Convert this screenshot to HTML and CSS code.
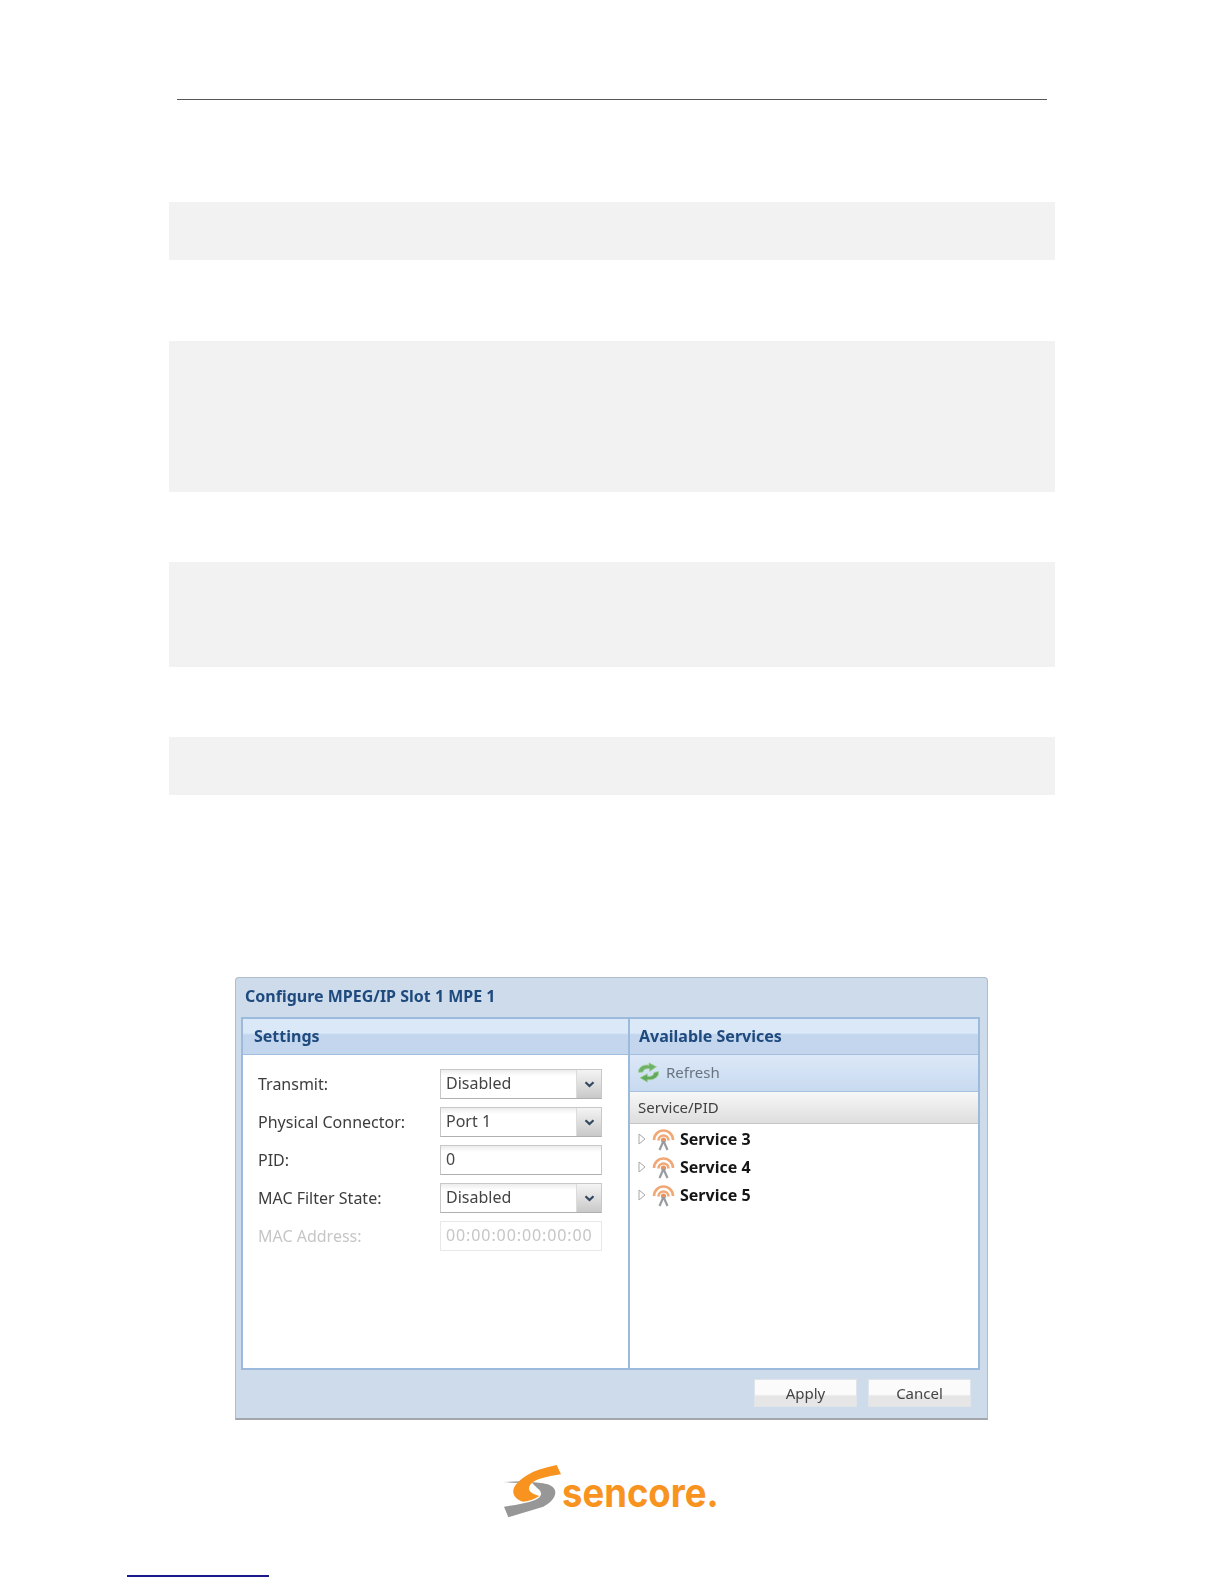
FILE: index.html
```html
<!DOCTYPE html>
<html lang="en">
<head>
<meta charset="utf-8">
<title>Configure MPEG/IP Slot 1 MPE 1</title>
<link rel="stylesheet" href="styles.css">
</head>
<body>
<div class="page">
  <div class="rule"></div>
  <div class="band band-a"></div>
  <div class="band band-b"></div>
  <div class="band band-c"></div>
  <div class="band band-d"></div>

  <section class="dialog">
    <h1 class="dialog-title">Configure MPEG/IP Slot 1 MPE 1</h1>
    <div class="panels">
      <div class="panel panel-left">
        <h2 class="panel-head">Settings</h2>
        <div class="form">
          <div class="row"><span class="label">Transmit:</span>
            <div class="field"><span class="val">Disabled</span><span class="trigger"><svg width="11" height="7" viewBox="0 0 11 7"><path d="M1.5 1.2 5.5 5 9.5 1.2" fill="none" stroke="#33475f" stroke-width="2.2"/></svg></span></div></div>
          <div class="row"><span class="label">Physical Connector:</span>
            <div class="field"><span class="val">Port 1</span><span class="trigger"><svg width="11" height="7" viewBox="0 0 11 7"><path d="M1.5 1.2 5.5 5 9.5 1.2" fill="none" stroke="#33475f" stroke-width="2.2"/></svg></span></div></div>
          <div class="row"><span class="label">PID:</span>
            <div class="field"><span class="val">0</span></div></div>
          <div class="row"><span class="label">MAC Filter State:</span>
            <div class="field"><span class="val">Disabled</span><span class="trigger"><svg width="11" height="7" viewBox="0 0 11 7"><path d="M1.5 1.2 5.5 5 9.5 1.2" fill="none" stroke="#33475f" stroke-width="2.2"/></svg></span></div></div>
          <div class="row row-disabled"><span class="label">MAC Address:</span>
            <div class="field"><span class="val val-mac">00:00:00:00:00:00</span></div></div>
        </div>
      </div>
      <div class="panel panel-right">
        <h2 class="panel-head">Available Services</h2>
        <div class="toolbar">
          <svg class="refresh-icon" width="23" height="21" viewBox="0 0 23 21">
            <path d="M1.500 10.500C1 5.500 6 2 12 3.200V.8L19.500 4.800 12.500 9.500V6.800C8.500 6.300 6.500 7.500 6 10Z" fill="#6fb267" stroke="#a4d29c" stroke-width=".8"/>
            <path d="M21.500 9.500C22.500 15 16.500 18.500 10.500 17.700V20.200L3 15.800 10.500 11.800V14.300C14 14.800 16.800 13.500 17 10.500Z" fill="#62a95b" stroke="#a4d29c" stroke-width=".8"/>
          </svg>
          <span>Refresh</span>
        </div>
        <div class="col-head">Service/PID</div>
        <ul class="tree">
          <li class="tree-row">
            <svg class="twist" width="8" height="12" viewBox="0 0 8 12"><path d="M1 1 7 6 1 11Z" fill="#fff" stroke="#a8a8a8"/></svg>
            <svg class="svc" width="23" height="23" viewBox="0 0 23 23"><g fill="none" stroke="#f1a877" stroke-width="2.600"><path d="M2 12a9.500 9.500 0 0 1 19 0"/><path d="M6.500 12.500a5 5 0 0 1 10 0"/></g><circle cx="11.500" cy="12" r="2.600" fill="#ea935a"/><path d="M11.500 13 7.500 22M11.500 13 15.500 22" fill="none" stroke="#989ca1" stroke-width="2.200"/></svg>
            <span>Service 3</span>
          </li>
          <li class="tree-row">
            <svg class="twist" width="8" height="12" viewBox="0 0 8 12"><path d="M1 1 7 6 1 11Z" fill="#fff" stroke="#a8a8a8"/></svg>
            <svg class="svc" width="23" height="23" viewBox="0 0 23 23"><g fill="none" stroke="#f1a877" stroke-width="2.600"><path d="M2 12a9.500 9.500 0 0 1 19 0"/><path d="M6.500 12.500a5 5 0 0 1 10 0"/></g><circle cx="11.500" cy="12" r="2.600" fill="#ea935a"/><path d="M11.500 13 7.500 22M11.500 13 15.500 22" fill="none" stroke="#989ca1" stroke-width="2.200"/></svg>
            <span>Service 4</span>
          </li>
          <li class="tree-row">
            <svg class="twist" width="8" height="12" viewBox="0 0 8 12"><path d="M1 1 7 6 1 11Z" fill="#fff" stroke="#a8a8a8"/></svg>
            <svg class="svc" width="23" height="23" viewBox="0 0 23 23"><g fill="none" stroke="#f1a877" stroke-width="2.600"><path d="M2 12a9.500 9.500 0 0 1 19 0"/><path d="M6.500 12.500a5 5 0 0 1 10 0"/></g><circle cx="11.500" cy="12" r="2.600" fill="#ea935a"/><path d="M11.500 13 7.500 22M11.500 13 15.500 22" fill="none" stroke="#989ca1" stroke-width="2.200"/></svg>
            <span>Service 5</span>
          </li>
        </ul>
      </div>
    </div>
    <div class="actions">
      <button class="btn" type="button">Apply</button>
      <button class="btn" type="button">Cancel</button>
    </div>
  </section>

  <div class="logo">
    <svg width="250" height="90" viewBox="0 0 750 270">
      <path d="M70 141 145 137 155 143 105 144Z" fill="#a8a8a8"/>
      <path d="M155 142C195 143 226 150 226 172 226 192 205 207 190 215L85 247 72 215C105 210 140 205 165 195 185 187 190 172 172 160 165 153 160 148 155 142Z" fill="#979797"/>
      <path d="M230 90 243 118C205 124 170 130 155 145 140 160 145 175 178 183 165 192 148 198 130 200 108 195 98 180 100 165 104 145 130 125 160 110 185 100 210 95 230 90Z" fill="#f7931e"/>
      <text class="logo-word" x="246" y="215" textLength="470" lengthAdjust="spacingAndGlyphs">sencore.</text>
    </svg>
  </div>

  <div class="foot-link"></div>
</div>
</body>
</html>
```
FILE: styles.css
```css
* { box-sizing: border-box; }
html, body { margin: 0; padding: 0; background: #fff; }
body { font-family: "Noto Sans", "DejaVu Sans", sans-serif; }

.page {
  width: 1224px;
  height: 1584px;
  padding-top: 99px;
  overflow: hidden;
}

.rule {
  width: 870px;
  height: 1px;
  margin: 0 0 102px 177px;
  background: #55575a;
}

.band {
  margin-left: 169px;
  width: 886px;
  background: #f2f2f2;
}
.band-a { height: 58px; margin-bottom: 81px; }
.band-b { height: 151px; margin-bottom: 70px; }
.band-c { height: 105px; margin-bottom: 70px; }
.band-d { height: 58px; margin-bottom: 182px; }

.dialog {
  width: 753px;
  height: 443px;
  margin-left: 235px;
  padding: 0 7px 0 5px;
  display: flex;
  flex-direction: column;
  background: #cddbea;
  border: 1px solid #aebccd;
  border-bottom: 2px solid #a3a6aa;
  border-radius: 4px 4px 0 0;
  filter: blur(.4px);
}
.dialog-title {
  height: 39px;
  margin: 0;
  padding: 8px 4px 0;
  font-size: 16px;
  line-height: 20px;
  font-weight: 700;
  color: #1f4a7e;
}

.panels {
  display: flex;
  height: 353px;
  border: 2px solid #9cbadc;
  background: #fff;
}
.panel { display: flex; flex-direction: column; }
.panel-left { width: 387px; border-right: 2px solid #9cbadc; }
.panel-right { flex: 1; }

.panel-head {
  height: 36px;
  margin: 0;
  padding: 7px 9px 0;
  font-size: 16px;
  line-height: 20px;
  font-weight: 700;
  color: #1f4a7e;
  background: linear-gradient(#dbe8f8 0 40%, #c3d6ee 45% 100%);
  border-bottom: 1px solid #a3bfe0;
}
.panel-left .panel-head { padding-left: 11px; }

.form { padding: 14px 0 0 15px; display: flex; flex-direction: column; gap: 8px; }
.row { display: flex; align-items: center; height: 30px; }
.label {
  width: 182px;
  font-size: 16px;
  line-height: 30px;
  color: #3d3d3d;
}
.field {
  width: 162px;
  height: 30px;
  display: flex;
  justify-content: space-between;
  background: linear-gradient(#ececec, #fff 6px);
  border: 1px solid #c8c8c8;
  border-bottom-color: #b0b0b0;
}
.val {
  padding-left: 5px;
  font-size: 16px;
  line-height: 26px;
  color: #444;
}
.val-mac { letter-spacing: .9px; }
.trigger {
  width: 25px;
  display: flex;
  align-items: center;
  justify-content: center;
  background: linear-gradient(#f4f4f4, #c9c9c9);
  border-left: 1px solid #dcdcdc;
}
.row-disabled .label, .row-disabled .val { color: #c6c6c6; }
.row-disabled .field { background: #fff; border-color: #e8e8e8; }

.toolbar {
  height: 37px;
  display: flex;
  align-items: center;
  gap: 6px;
  padding: 0 0 2px 7px;
  font-size: 15px;
  color: #6a7480;
  background: linear-gradient(#dce8f7, #c8daf0);
  border-bottom: 1px solid #a7c0de;
}
.col-head {
  height: 32px;
  padding-left: 8px;
  font-size: 15px;
  line-height: 30px;
  color: #3f3f3f;
  background: linear-gradient(#f7f7f7, #dedede);
  border-bottom: 1px solid #c6c6c6;
}
.tree { list-style: none; margin: 0; padding: 1px 0 0; }
.tree-row {
  height: 28px;
  display: flex;
  align-items: center;
  padding-left: 8px;
  font-size: 16px;
  font-weight: 700;
  color: #151515;
}
.twist { margin-right: 6px; }
.svc { margin-right: 5px; }

.actions {
  flex: 1;
  display: flex;
  justify-content: flex-end;
  align-items: flex-start;
  gap: 11px;
  padding: 9px 9px 0 0;
}
.btn {
  width: 103px;
  height: 28px;
  padding: 0;
  font: 15px "Noto Sans", "DejaVu Sans", sans-serif;
  color: #444;
  background: linear-gradient(#fbfbfb 0 55%, #e6e6e6 62% 100%);
  border: 1px solid #dfe4e9;
}

.logo { width: 250px; height: 90px; margin: 15px 0 0 480px; }
.logo-word {
  font-family: "Inter", "DejaVu Sans", sans-serif;
  font-weight: 700;
  font-size: 118px;
  fill: #f7931e;
}

.foot-link {
  width: 142px;
  height: 2px;
  margin: 50px 0 0 127px;
  background: #1a1a8c;
}
```
